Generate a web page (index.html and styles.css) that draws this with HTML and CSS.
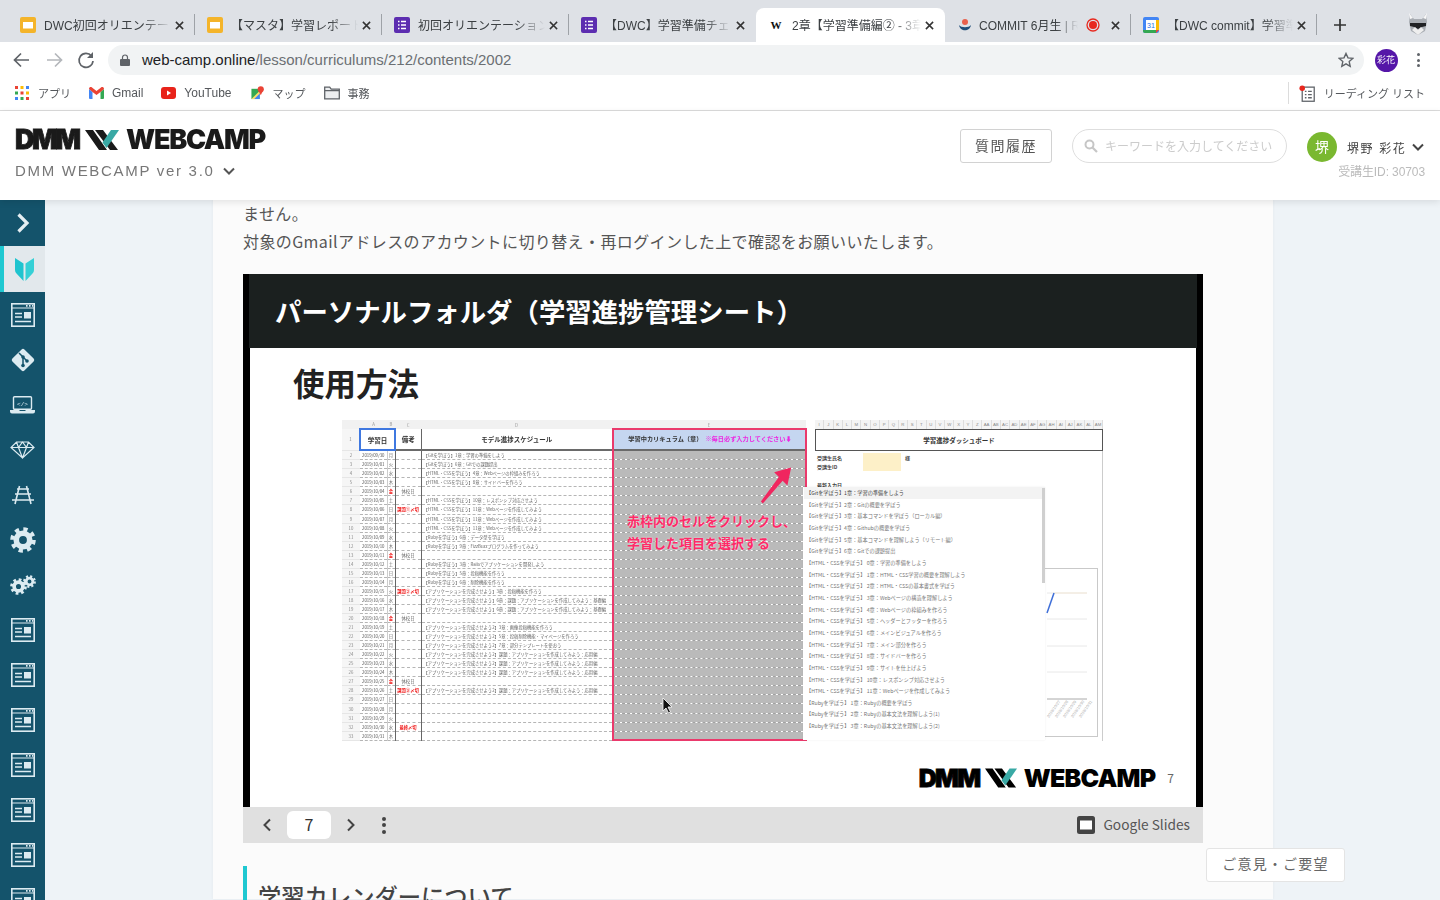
FILE: index.html
```html
<!DOCTYPE html>
<html lang="ja">
<head>
    <meta charset="UTF-8">
    <title>2章【学習準備編② - 3章</title>
    <link rel="stylesheet" href="styles.css">
</head>
<body>
    <svg class="defs" width="0" height="0">
        <symbol id="x" viewBox="0 0 10 10"><path d="M1 1l8 8M9 1l-8 8" stroke="#333" stroke-width="1.7" fill="none"/></symbol>
        <symbol id="fav-slides" viewBox="0 0 16 16"><rect width="16" height="16" rx="2" fill="#f4b42a"/><rect x="3" y="5" width="10" height="6.5" fill="#fff"/></symbol>
        <symbol id="fav-forms" viewBox="0 0 16 16"><rect width="16" height="16" rx="2" fill="#5c2db0"/><path d="M4 4.5h1.5M7 4.5h5M4 8h1.5M7 8h5M4 11.500h1.500M7 11.500h5" stroke="#fff" stroke-width="1.500"/></symbol>
        <symbol id="news" viewBox="0 0 24 24"><g fill="none" stroke="#dcebf1"><rect x=".8" y=".8" width="22.400" height="22.400" stroke-width="1.600"/><path d="M1 5h22" stroke-width="1"/><path d="M4 10.500h7M4 14h7M4 18.500h16" stroke-width="1.500"/></g><path d="M13 9h7v6.500h-7z" fill="#dcebf1"/><path d="M15 2.900h1.600M18 2.900h1.600M21 2.900h1" stroke="#dcebf1" stroke-width="1.600"/></symbol>
        <symbol id="gear" viewBox="0 0 24 24"><circle cx="12" cy="12" r="9.700" fill="none" stroke="#dcebf1" stroke-width="4.200" stroke-dasharray="3.800 3.820"/><circle cx="12" cy="12" r="6.200" fill="none" stroke="#dcebf1" stroke-width="5.200"/></symbol>
    </svg>

    <div class="tabstrip">
        <div class="tab sep"><svg class="fav"><use href="#fav-slides"/></svg><span class="tab-title">DWC初回オリエンテー</span><svg class="tab-x"><use href="#x"/></svg></div>
        <div class="tab sep"><svg class="fav"><use href="#fav-slides"/></svg><span class="tab-title">【マスタ】学習レポート</span><svg class="tab-x"><use href="#x"/></svg></div>
        <div class="tab sep"><svg class="fav"><use href="#fav-forms"/></svg><span class="tab-title">初回オリエンテーション</span><svg class="tab-x"><use href="#x"/></svg></div>
        <div class="tab"><svg class="fav"><use href="#fav-forms"/></svg><span class="tab-title">【DWC】学習準備チェ</span><svg class="tab-x"><use href="#x"/></svg></div>
        <div class="tab tab-active"><span class="fav fav-w">W</span><span class="tab-title">2章【学習準備編② - 3章</span><svg class="tab-x"><use href="#x"/></svg></div>
        <div class="tab tab-narrow sep">
            <svg class="fav" viewBox="0 0 16 16"><circle cx="8" cy="5" r="3" fill="#e8604c"/><path d="M2 8c1 7 11 7 12 0-2 3-10 3-12 0z" fill="#1f4e79"/></svg>
            <span class="tab-title tab-title-short">COMMIT 6月生 | R</span>
            <svg class="rec" viewBox="0 0 14 14"><circle cx="7" cy="7" r="6" fill="none" stroke="#e8281e" stroke-width="1.300"/><circle cx="7" cy="7" r="4" fill="#e8281e"/></svg>
            <svg class="tab-x"><use href="#x"/></svg>
        </div>
        <div class="tab tab-narrow sep">
            <svg class="fav" viewBox="0 0 16 16"><rect width="16" height="16" rx="2" fill="#4285f4"/><rect x="3" y="3" width="10" height="10" fill="#fff"/><path d="M13 3h3v10h-3z" fill="#fbbc04"/><path d="M0 13h13v3H2a2 2 0 0 1-2-2z" fill="#34a853"/><path d="M13 13h3l-3 3z" fill="#ea4335"/><text x="8" y="11" font-size="7" text-anchor="middle" fill="#1a73e8">31</text></svg>
            <span class="tab-title">【DWC commit】学習準</span><svg class="tab-x"><use href="#x"/></svg>
        </div>
        <svg class="newtab" viewBox="0 0 14 14"><path d="M7 1v12M1 7h12" stroke="#333" stroke-width="1.700"/></svg>
        <svg class="raccoon" viewBox="0 0 22 24"><path d="M3 2l4 5h8l4-5 1 8-2 9-7 4-7-4-2-9z" fill="#a9adb3"/><path d="M3 11h16v3l-4 1-4 2-4-2-4-1z" fill="#202124"/><path d="M5 18l3-3 3 3 3-3 3 3-6 5z" fill="#eee"/><path d="M2 1l4 5-3 1zM20 1l-4 5 3 1z" fill="#f8f8f8"/></svg>
    </div>

    <div class="toolbar">
        <svg class="nav-btn" viewBox="0 0 32 32"><path d="M23 16H9M15 9.500L8.500 16l6.500 6.500" fill="none" stroke="#5f6368" stroke-width="1.700"/></svg>
        <svg class="nav-btn" viewBox="0 0 32 32"><path d="M9 16h14M17 9.500l6.500 6.500-6.500 6.500" fill="none" stroke="#b4b7bb" stroke-width="1.700"/></svg>
        <svg class="nav-btn" viewBox="0 0 32 32"><path d="M21.500 12A7 7 0 1 0 23 17" fill="none" stroke="#5f6368" stroke-width="1.700"/><path d="M23 8v6h-6z" fill="#5f6368"/></svg>
        <div class="omnibox">
            <svg class="lock" viewBox="0 0 10 12"><path d="M2.500 5V3.500a2.500 2.500 0 0 1 5 0V5" fill="none" stroke="#5f6368" stroke-width="1.200"/><rect y="5" width="10" height="7" rx="1" fill="#5f6368"/></svg>
            <span class="url"><b>web-camp.online</b>/lesson/curriculums/212/contents/2002</span>
            <svg class="star" viewBox="0 0 16 16"><path d="M8 1.500l2 4.400 4.800.500-3.600 3.200 1 4.700L8 11.900l-4.200 2.400 1-4.700L1.200 6.400 6 5.900z" fill="none" stroke="#5f6368" stroke-width="1.400"/></svg>
        </div>
        <div class="tool-slot"><span class="profile">彩花</span></div>
        <div class="tool-slot"><span class="kebab"><i></i><i></i><i></i></span></div>
    </div>

    <div class="bookmarks">
        <div class="bm">
            <svg class="bm-icon" viewBox="0 0 14 14"><g fill="#ea4335"><rect width="3" height="3"/><rect x="5.500" width="3" height="3" fill="#fbbc04"/><rect x="11" width="3" height="3" fill="#4285f4"/></g><g><rect y="5.500" width="3" height="3" fill="#34a853"/><rect x="5.500" y="5.500" width="3" height="3" fill="#ea4335"/><rect x="11" y="5.500" width="3" height="3" fill="#fbbc04"/><rect y="11" width="3" height="3" fill="#4285f4"/><rect x="5.500" y="11" width="3" height="3" fill="#34a853"/><rect x="11" y="11" width="3" height="3" fill="#ea4335"/></g></svg>
            <span class="bm-ja">アプリ</span>
        </div>
        <div class="bm">
            <svg class="bm-icon" viewBox="0 0 15 12"><path d="M0 2v9a1 1 0 0 0 1 1h2.500V5z" fill="#4285f4"/><path d="M15 2v9a1 1 0 0 1-1 1h-2.500V5z" fill="#34a853"/><path d="M0 2c0-2 2-2.500 3-1.500L7.500 4 12 .5c1-1 3-.5 3 1.500l-3.500 3-4 3-4-3z" fill="#ea4335"/></svg>
            <span>Gmail</span>
        </div>
        <div class="bm">
            <svg class="bm-icon" viewBox="0 0 15 12"><rect width="15" height="12" rx="3" fill="#e8231a"/><path d="M6 3.500v5l4-2.500z" fill="#fff"/></svg>
            <span>YouTube</span>
        </div>
        <div class="bm">
            <svg class="bm-icon bm-maps" viewBox="0 0 15 15"><path d="M1 3h9v11H1z" fill="#34a853"/><path d="M1 14l9-9v9z" fill="#fbdd6c"/><path d="M4 14l6-6v6z" fill="#4285f4"/><circle cx="11" cy="3.500" r="3.300" fill="#ea4335"/><path d="M9 5.500l2 4.500 2-4.500z" fill="#ea4335"/></svg>
            <span class="bm-ja">マップ</span>
        </div>
        <div class="bm">
            <svg class="bm-icon bm-folder" viewBox="0 0 16 13"><path d="M.7 12.300V.7h5l1.500 2h8.100v9.600zM.7 4.200h14.600" fill="#eceef0" stroke="#5f6368" stroke-width="1.300"/></svg>
            <span class="bm-ja">事務</span>
        </div>
        <div class="reading">
            <svg class="bm-read" viewBox="0 0 15 16"><rect x="3" y="2" width="11.300" height="13.300" fill="#fff" stroke="#5f6368" stroke-width="1.200"/><path d="M5.500 6h1.500M8.500 6h3.500M5.500 9h1.500M8.500 9h3.500M5.500 12h1.500M8.500 12h3.500" stroke="#5f6368" stroke-width="1.200"/><circle cx="3" cy="3" r="2.600" fill="#e8281e"/></svg>
            <span class="bm-ja">リーディング リスト</span>
        </div>
    </div>

    <header class="app-header">
        <div>
            <div class="logo">
                <span class="logo-dmm">DMM</span>
                <svg class="logo-mark" viewBox="0 0 35 20"><path d="M0 0h8l14 20h-8zM10 0h8l15 20h-8z" fill="#1a1a1a"/><path d="M26 0h8L21.500 18l-4-5.500z" fill="#39a9a5"/></svg>
                <span class="logo-word">WEBCAMP</span>
            </div>
            <div class="course">
                <span>DMM WEBCAMP ver 3.0</span>
                <svg class="chev" viewBox="0 0 12 8"><path d="M1 1.500l5 5 5-5" fill="none" stroke="#555" stroke-width="2"/></svg>
            </div>
        </div>
        <div class="head-right">
            <a class="history-btn">質問履歴</a>
            <div class="search">
                <svg class="search-icon" viewBox="0 0 14 14"><circle cx="5.500" cy="5.500" r="4" fill="none" stroke="#c6c6c6" stroke-width="2"/><path d="M8.500 8.500l4.500 4.500" stroke="#c6c6c6" stroke-width="2.200"/></svg>
                <span>キーワードを入力してください</span>
            </div>
            <div class="user">
                <div class="user-row">
                    <span class="user-avatar">堺</span>
                    <span class="user-name">堺野 彩花</span>
                    <svg class="chev" viewBox="0 0 12 8"><path d="M1 1.500l5 5 5-5" fill="none" stroke="#444" stroke-width="2"/></svg>
                </div>
                <div class="user-id">受講生ID: 30703</div>
            </div>
        </div>
    </header>

    <div class="app-body">
        <nav class="sidebar">
            <div class="side-item side-top"><svg width="14" height="22" viewBox="0 0 14 22"><path d="M2.500 2.500L11 11l-8.500 8.500" fill="none" stroke="#e4eef2" stroke-width="3.200"/></svg></div>
            <div class="side-item side-active"><svg width="19" height="24" viewBox="0 0 19 24"><path d="M0 1l8.500 5.500V24L1.500 16.500Q0 15 0 13z" fill="#1fc4cf"/><path d="M19 1l-8.500 5.500V24l7-7.500Q19 15 19 13z" fill="#35d0d6"/></svg></div>
            <div class="side-item"><svg class="side-icon"><use href="#news"/></svg></div>
            <div class="side-item"><svg width="26" height="26" viewBox="0 0 26 26"><rect x="4.500" y="4.500" width="17" height="17" rx="2" transform="rotate(45 13 13)" fill="#dcebf1"/><path d="M9 6l8 8M13 10v8" stroke="#14536b" stroke-width="1.500"/><circle cx="13" cy="10" r="1.800" fill="#14536b"/><circle cx="17" cy="14" r="1.800" fill="#14536b"/><circle cx="13" cy="18.500" r="1.800" fill="#14536b"/></svg></div>
            <div class="side-item"><svg width="25" height="18" viewBox="0 0 25 18"><rect x="3.500" y=".7" width="18" height="12.600" rx="1" fill="none" stroke="#dcebf1" stroke-width="1.400"/><path d="M0 14h9l1 1h5l1-1h9v1.500a2 2 0 0 1-2 2H2a2 2 0 0 1-2-2z" fill="#dcebf1"/><text x="12.500" y="9.500" font-size="6" text-anchor="middle" fill="#dcebf1" font-family="Liberation Mono">&lt;/&gt;</text></svg></div>
            <div class="side-item"><svg width="25" height="18" viewBox="0 0 25 18"><path d="M6.500 1h12l5.500 5.500L12.500 17 1 6.500zM1 6.500h23M6.500 1l2 5.500 4 10.500 4-10.500 2-5.500M8.500 6.500L12.500 1l4 5.500" fill="none" stroke="#dcebf1" stroke-width="1.200"/></svg></div>
            <div class="side-item"><svg width="24" height="20" viewBox="0 0 24 20"><path d="M8.500 1L4 19M15.500 1L20 19M1 15h22M4 9h16M6 4h12" fill="none" stroke="#dcebf1" stroke-width="1.600"/></svg></div>
            <div class="side-item"><svg class="side-icon side-gear"><use href="#gear"/></svg></div>
            <div class="side-item"><div class="gears"><svg class="gear-big"><use href="#gear"/></svg><svg class="gear-small"><use href="#gear"/></svg></div></div>
            <div class="side-item"><svg class="side-icon"><use href="#news"/></svg></div>
            <div class="side-item"><svg class="side-icon"><use href="#news"/></svg></div>
            <div class="side-item"><svg class="side-icon"><use href="#news"/></svg></div>
            <div class="side-item"><svg class="side-icon"><use href="#news"/></svg></div>
            <div class="side-item"><svg class="side-icon"><use href="#news"/></svg></div>
            <div class="side-item"><svg class="side-icon"><use href="#news"/></svg></div>
            <div class="side-item"><svg class="side-icon"><use href="#news"/></svg></div>
        </nav>

        <main class="main">
            <article class="card">
                <p class="lead">ません。<br>対象のGmailアドレスのアカウントに切り替え・再ログインした上で確認をお願いいたします。</p>

                <div class="slide">
                    <div class="slide-title">パーソナルフォルダ（学習進捗管理シート）</div>
                    <div class="slide-heading">使用方法</div>

                    <div class="sheet">
                        <table class="grid">
                            <colgroup><col class="c-n"><col class="c-a"><col class="c-b"><col class="c-c"><col class="c-d"><col class="c-e"></colgroup>
                            <tr class="letters"><th></th><th>A</th><th>B</th><th>C</th><th>D</th><th>E</th></tr>
                            <tr class="heads"><th>1</th><td colspan="2" class="h-sel">学習日</td><td class="h-c">備考</td><td class="h-d">モデル進捗スケジュール</td><td class="h-e">学習中カリキュラム（章）<em>※毎日必ず入力してください⬇</em></td></tr>
                            <tr><th>2</th><td>2019/09/30</td><td>月</td><td></td><td>【Gitを学ぼう】1章：学習の準備をしよう</td><td></td></tr>
                            <tr><th>3</th><td>2019/10/01</td><td>火</td><td></td><td>【Gitを学ぼう】6章：Gitでの課題提出</td><td></td></tr>
                            <tr><th>4</th><td>2019/10/02</td><td>水</td><td></td><td>【HTML・CSSを学ぼう】4章：Webページの枠組みを作ろう</td><td></td></tr>
                            <tr><th>5</th><td>2019/10/03</td><td>木</td><td></td><td>【HTML・CSSを学ぼう】8章：サイドバーを作ろう</td><td></td></tr>
                            <tr><th>6</th><td>2019/10/04</td><td class="red">金</td><td>休校日</td><td></td><td></td></tr>
                            <tr><th>7</th><td>2019/10/05</td><td>土</td><td></td><td>【HTML・CSSを学ぼう】10章：レスポンシブ対応させよう</td><td></td></tr>
                            <tr><th>8</th><td>2019/10/06</td><td>日</td><td class="red">課題①〆切</td><td>【HTML・CSSを学ぼう】11章：Webページを作成してみよう</td><td></td></tr>
                            <tr><th>9</th><td>2019/10/07</td><td>月</td><td></td><td>【HTML・CSSを学ぼう】11章：Webページを作成してみよう</td><td></td></tr>
                            <tr><th>10</th><td>2019/10/08</td><td>火</td><td></td><td>【HTML・CSSを学ぼう】11章：Webページを作成してみよう</td><td></td></tr>
                            <tr><th>11</th><td>2019/10/09</td><td>水</td><td></td><td>【Rubyを学ぼう】6章：データ型を学ぼう</td><td></td></tr>
                            <tr><th>12</th><td>2019/10/10</td><td>木</td><td></td><td>【Rubyを学ぼう】9章：FizzBuzzプログラムを作ってみよう</td><td></td></tr>
                            <tr><th>13</th><td>2019/10/11</td><td class="red">金</td><td>休校日</td><td></td><td></td></tr>
                            <tr><th>14</th><td>2019/10/12</td><td>土</td><td></td><td>【Rubyを学ぼう】3章：Railsでアプリケーションを開発しよう</td><td></td></tr>
                            <tr><th>15</th><td>2019/10/13</td><td>日</td><td></td><td>【Rubyを学ぼう】5章：投稿機能を作ろう</td><td></td></tr>
                            <tr><th>16</th><td>2019/10/14</td><td>月</td><td></td><td>【Rubyを学ぼう】6章：削除機能を作ろう</td><td></td></tr>
                            <tr><th>17</th><td>2019/10/15</td><td>火</td><td class="red">課題②〆切</td><td>【アプリケーションを完成させよう】3章：投稿機能を作ろう</td><td></td></tr>
                            <tr><th>18</th><td>2019/10/16</td><td>水</td><td></td><td>【アプリケーションを完成させよう】6章：課題：アプリケーションを作成してみよう：基礎編</td><td></td></tr>
                            <tr><th>19</th><td>2019/10/17</td><td>木</td><td></td><td>【アプリケーションを完成させよう】6章：課題：アプリケーションを作成してみよう：基礎編</td><td></td></tr>
                            <tr><th>20</th><td>2019/10/18</td><td class="red">金</td><td>休校日</td><td></td><td></td></tr>
                            <tr><th>21</th><td>2019/10/19</td><td>土</td><td></td><td>【アプリケーションを完成させよう2】3章：画像投稿機能を作ろう</td><td></td></tr>
                            <tr><th>22</th><td>2019/10/20</td><td>日</td><td></td><td>【アプリケーションを完成させよう2】5章：投稿削除機能・マイページを作ろう</td><td></td></tr>
                            <tr><th>23</th><td>2019/10/21</td><td>月</td><td></td><td>【アプリケーションを完成させよう2】7章：部分テンプレートを使おう</td><td></td></tr>
                            <tr><th>24</th><td>2019/10/22</td><td>火</td><td></td><td>【アプリケーションを完成させよう2】課題：アプリケーションを作成してみよう：応用編</td><td></td></tr>
                            <tr><th>25</th><td>2019/10/23</td><td>水</td><td></td><td>【アプリケーションを完成させよう2】課題：アプリケーションを作成してみよう：応用編</td><td></td></tr>
                            <tr><th>26</th><td>2019/10/24</td><td>木</td><td></td><td>【アプリケーションを完成させよう2】課題：アプリケーションを作成してみよう：応用編</td><td></td></tr>
                            <tr><th>27</th><td>2019/10/25</td><td class="red">金</td><td>休校日</td><td></td><td></td></tr>
                            <tr><th>28</th><td>2019/10/26</td><td>土</td><td class="red">課題③〆切</td><td>【アプリケーションを完成させよう2】課題：アプリケーションを作成してみよう：応用編</td><td></td></tr>
                            <tr><th>29</th><td>2019/10/27</td><td>日</td><td></td><td></td><td></td></tr>
                            <tr><th>30</th><td>2019/10/28</td><td>月</td><td></td><td></td><td></td></tr>
                            <tr><th>31</th><td>2019/10/29</td><td>火</td><td></td><td></td><td></td></tr>
                            <tr><th>32</th><td>2019/10/30</td><td>水</td><td class="red">最終〆切</td><td></td><td></td></tr>
                            <tr><th>33</th><td>2019/10/31</td><td>木</td><td></td><td></td><td></td></tr>
                        </table>

                        <div class="board">
                            <div class="board-letters"><span>I</span><span>J</span><span>K</span><span>L</span><span>M</span><span>N</span><span>O</span><span>P</span><span>Q</span><span>R</span><span>S</span><span>T</span><span>U</span><span>V</span><span>W</span><span>X</span><span>Y</span><span>Z</span><span>AA</span><span>AB</span><span>AC</span><span>AD</span><span>AE</span><span>AF</span><span>AG</span><span>AH</span><span>AI</span><span>AJ</span><span>AK</span><span>AL</span><span>AM</span></div>
                            <div class="board-head">学習進捗ダッシュボード</div>
                            <div class="board-info">
                                <span>受講生氏名</span><i class="board-yellow"></i><span>様</span>
                                <span>受講生ID</span><span></span>
                                <span class="board-gap"></span>
                                <span>最新入力日</span>
                            </div>
                        </div>

                        <svg class="chart" viewBox="0 0 283 169">
                            <rect x=".5" y=".5" width="282" height="168" fill="#fff" stroke="#c9c9c9"/>
                            <path d="M232 25h40M232 51h40M232 78h40M232 104h40" stroke="#e8e8e8"/>
                            <path d="M232 131h40" stroke="#aaa"/>
                            <path d="M239 25h33" stroke="#f5ead9"/>
                            <path d="M232 45l7-20" stroke="#3f6fd8" stroke-width="1.500" fill="none"/>
                            <g font-size="4" fill="#aaa" font-family="Liberation Sans">
                                <text transform="translate(234 150) rotate(-55)">2019/10/27</text>
                                <text transform="translate(242 150) rotate(-55)">2019/10/28</text>
                                <text transform="translate(250 150) rotate(-55)">2019/10/29</text>
                                <text transform="translate(258 150) rotate(-55)">2019/10/30</text>
                                <text transform="translate(266 150) rotate(-55)">2019/10/31</text>
                            </g>
                        </svg>

                        <div class="e-frame"></div>
                        <ul class="dropdown">
                            <li class="on">【Gitを学ぼう】1章：学習の準備をしよう</li>
                            <li>【Gitを学ぼう】2章：Gitの概要を学ぼう</li>
                            <li>【Gitを学ぼう】3章：基本コマンドを学ぼう（ローカル編）</li>
                            <li>【Gitを学ぼう】4章：Githubの概要を学ぼう</li>
                            <li>【Gitを学ぼう】5章：基本コマンドを理解しよう（リモート編）</li>
                            <li>【Gitを学ぼう】6章：Gitでの課題提出</li>
                            <li>【HTML・CSSを学ぼう】 0章：学習の準備をしよう</li>
                            <li>【HTML・CSSを学ぼう】 1章：HTML・CSS学習の概要を理解しよう</li>
                            <li>【HTML・CSSを学ぼう】 2章：HTML・CSSの基本書式を学ぼう</li>
                            <li>【HTML・CSSを学ぼう】 3章：Webページの構造を理解しよう</li>
                            <li>【HTML・CSSを学ぼう】 4章：Webページの枠組みを作ろう</li>
                            <li>【HTML・CSSを学ぼう】 5章：ヘッダーとフッターを作ろう</li>
                            <li>【HTML・CSSを学ぼう】 6章：メインビジュアルを作ろう</li>
                            <li>【HTML・CSSを学ぼう】 7章：メイン部分を作ろう</li>
                            <li>【HTML・CSSを学ぼう】 8章：サイドバーを作ろう</li>
                            <li>【HTML・CSSを学ぼう】 9章：サイトを仕上げよう</li>
                            <li>【HTML・CSSを学ぼう】 10章：レスポンシブ対応させよう</li>
                            <li>【HTML・CSSを学ぼう】 11章：Webページを作成してみよう</li>
                            <li>【Rubyを学ぼう】 1章：Rubyの概要を学ぼう</li>
                            <li>【Rubyを学ぼう】 2章：Rubyの基本文法を理解しよう(1)</li>
                            <li>【Rubyを学ぼう】 3章：Rubyの基本文法を理解しよう(2)</li>
                        </ul>
                        <svg class="callout-arrow" viewBox="0 0 36 40"><path d="M33 1L15 6l5 5L1 37l2 2 21-24 5 5z" fill="#f0265f"/></svg>
                        <div class="callout">赤枠内のセルをクリックし、<br>学習した項目を選択する</div>
                        <svg class="cursor" viewBox="0 0 12 17"><path d="M1 1v13l3-3 2.500 5 2-1-2.500-5h4z" fill="#111" stroke="#fff" stroke-width=".8"/></svg>
                    </div>

                    <div class="slide-foot">
                        <div class="logo logo-small">
                            <span class="logo-dmm">DMM</span>
                            <svg class="logo-mark" viewBox="0 0 35 20"><path d="M0 0h8l14 20h-8zM10 0h8l15 20h-8z" fill="#000"/><path d="M26 0h8L21.500 18l-4-5.500z" fill="#39a9a5"/></svg>
                            <span class="logo-word">WEBCAMP</span>
                        </div>
                        <span class="page-no">7</span>
                    </div>
                </div>

                <div class="slide-bar">
                    <svg class="bar-chev" viewBox="0 0 10 14"><path d="M8 1.500L2.500 7 8 12.500" fill="none" stroke="#444" stroke-width="2"/></svg>
                    <span class="bar-page">7</span>
                    <svg class="bar-chev" viewBox="0 0 10 14"><path d="M2 1.500L7.500 7 2 12.500" fill="none" stroke="#444" stroke-width="2"/></svg>
                    <span class="kebab bar-kebab"><i></i><i></i><i></i></span>
                    <svg class="bar-slides" viewBox="0 0 18 18"><rect width="18" height="18" rx="2.500" fill="#444"/><rect x="3" y="4.500" width="12" height="9" fill="#fff"/></svg>
                    <span class="bar-name">Google Slides</span>
                </div>

                <h2 class="section-title">学習カレンダーについて</h2>
            </article>
        </main>
    </div>

    <a class="feedback">ご意見・ご要望</a>
</body>
</html>
```

FILE: styles.css
```css
* {
    box-sizing: border-box;
}
html, body {
    margin: 0;
    height: 900px;
    overflow: hidden;
}
body {
    position: relative;
    background: #fff;
    font-family: "Liberation Sans", "Noto Sans CJK JP", sans-serif;
    color: #3c4043;
    filter: blur(.3px);
}
.defs {
    position: absolute;
}

/* browser chrome */
.tabstrip {
    display: flex;
    align-items: flex-end;
    height: 42px;
    padding-left: 8px;
    background: #dee1e6;
}
.tab {
    position: relative;
    display: flex;
    align-items: center;
    width: 187px;
    height: 34px;
    padding: 0 11px 0 12px;
    font-size: 12px;
}
.tab.sep::after {
    content: "";
    position: absolute;
    right: 0;
    top: 6px;
    width: 1px;
    height: 21px;
    background: #9ea2a7;
}
.tab-active {
    width: 189px;
    background: #fff;
    border-radius: 8px 8px 0 0;
}
.tab-narrow {
    width: 186px;
}
.fav {
    flex: none;
    width: 16px;
    height: 16px;
}
.fav-w {
    font-family: "Liberation Serif", serif;
    font-weight: 700;
    font-size: 11px;
    line-height: 16px;
    text-align: center;
    color: #111;
}
.tab-title {
    flex: 1;
    min-width: 0;
    margin: 0 4px 2px 8px;
    white-space: nowrap;
    overflow: hidden;
    -webkit-mask-image: linear-gradient(to right, #000 78%, transparent);
}
.tab-title-short {
    flex: 0 0 99px;
    margin: 0 0 2px 6px;
}
.rec {
    flex: none;
    width: 14px;
    height: 14px;
    margin: 0 11px 0 8px;
}
.tab-x {
    flex: none;
    width: 9px;
    height: 9px;
}
.newtab {
    width: 14px;
    height: 14px;
    margin: 0 0 10px 16px;
}
.raccoon {
    width: 22px;
    height: 24px;
    margin: 0 11px 6px auto;
}
.toolbar {
    display: flex;
    align-items: center;
    height: 36px;
    padding: 0 6px;
    background: #fff;
}
.nav-btn {
    flex: none;
    width: 32px;
    height: 32px;
}
.omnibox {
    flex: 1;
    display: flex;
    align-items: center;
    height: 30px;
    margin: 0 6px;
    padding: 0 10px 0 12px;
    background: #f1f3f4;
    border-radius: 15px;
    font-size: 15px;
}
.lock {
    width: 10px;
    height: 12px;
    margin-right: 12px;
}
.url {
    margin-bottom: 1px;
    color: #6b6f73;
}
.url b {
    font-weight: 400;
    color: #202124;
}
.star {
    width: 16px;
    height: 16px;
    margin-left: auto;
}
.tool-slot {
    display: flex;
    justify-content: center;
    width: 32px;
}
.profile {
    width: 23px;
    height: 23px;
    border-radius: 50%;
    background: #5516a8;
    color: #fff;
    font-size: 9px;
    line-height: 23px;
    text-align: center;
}
.kebab {
    display: flex;
    flex-direction: column;
    gap: 2.500px;
}
.kebab i {
    width: 3px;
    height: 3px;
    border-radius: 50%;
    background: #5f6368;
}
.bookmarks {
    display: flex;
    align-items: center;
    height: 33px;
    padding: 0 15px 2px;
    border-bottom: 1px solid #dcdcdc;
    font-size: 12px;
    color: #55585c;
}
.bm {
    display: flex;
    align-items: center;
    gap: 8px;
    margin-right: 18px;
}
.bm:first-child {
    gap: 9px;
}
.bm-ja {
    font-size: 11px;
}
.bm-icon {
    flex: none;
    width: 14px;
    height: 14px;
}
.bm:nth-child(2) .bm-icon,
.bm:nth-child(3) .bm-icon,
.bm-maps {
    width: 15px;
}
.bm-folder {
    width: 16px;
}
.reading {
    display: flex;
    align-items: center;
    gap: 9px;
    height: 22px;
    margin-left: auto;
    padding-left: 10px;
    border-left: 1px solid #dcdcdc;
}
.bm-read {
    width: 16px;
    height: 17px;
}

/* site header */
.app-header {
    position: relative;
    z-index: 2;
    display: flex;
    justify-content: space-between;
    height: 89px;
    padding: 18px 15px 0;
    background: #fff;
    box-shadow: 0 2px 7px rgba(0, 0, 0, .1);
}
.logo {
    display: flex;
    align-items: center;
    height: 22px;
    font-family: Inter, "Liberation Sans", sans-serif;
    font-size: 27px;
    font-weight: 900;
    line-height: 22px;
    color: #1a1a1a;
}
.logo-dmm {
    width: 67px;
    letter-spacing: -2.500px;
    -webkit-text-stroke: .8px currentColor;
}
.logo-mark {
    width: 35px;
    height: 20px;
    margin: 0 6px 0 3px;
}
.logo-word {
    letter-spacing: -1.300px;
}
.logo-small {
    font-size: 25px;
    color: #000;
}
.logo-small .logo-dmm {
    width: 63px;
    letter-spacing: -1.800px;
}
.logo-small .logo-mark {
    width: 33px;
    margin: 0 6px 0 3px;
}
.logo-small .logo-word {
    letter-spacing: -.8px;
}
.course {
    display: flex;
    align-items: center;
    gap: 8px;
    margin-top: 11px;
    font-size: 15px;
    letter-spacing: 1.700px;
    color: #777;
}
.chev {
    width: 12px;
    height: 8px;
}
.head-right {
    display: flex;
    align-items: flex-start;
    gap: 20px;
}
.history-btn {
    width: 92px;
    height: 34px;
    border: 1px solid #d2d2d2;
    border-radius: 3px;
    font-size: 14px;
    letter-spacing: 1.500px;
    line-height: 32px;
    text-align: center;
    color: #555;
}
.search {
    display: flex;
    align-items: center;
    gap: 7px;
    width: 215px;
    height: 34px;
    padding: 0 0 1px 11px;
    border: 1px solid #dedede;
    border-radius: 17px;
    font-size: 12px;
    color: #ccc;
}
.search-icon {
    width: 14px;
    height: 14px;
}
.user {
    width: 118px;
    padding-top: 3px;
}
.user-row {
    display: flex;
    align-items: center;
}
.user-avatar {
    width: 30px;
    height: 30px;
    border-radius: 50%;
    background: #7ab830;
    color: #fff;
    font-size: 14px;
    line-height: 30px;
    text-align: center;
}
.user-name {
    margin: 0 6px 0 10px;
    font-size: 12px;
    letter-spacing: 1.600px;
    color: #444;
    white-space: nowrap;
}
.user-id {
    font-size: 12px;
    letter-spacing: -.1px;
    text-align: right;
    color: #bbb;
    white-space: nowrap;
}

/* sidebar + page */
.app-body {
    display: flex;
    height: 700px;
    overflow: hidden;
    font-family: "Noto Sans CJK JP", sans-serif;
}
.sidebar {
    flex: none;
    width: 45px;
    background: #14536b;
}
.side-item {
    display: flex;
    align-items: center;
    justify-content: center;
    height: 45px;
}
.side-top {
    height: 46px;
}
.side-active {
    height: 46px;
    background: #e2e8ec;
    border-left: 4px solid #1fc8d1;
}
.side-icon {
    width: 24px;
    height: 24px;
}
.side-gear {
    width: 26px;
    height: 26px;
}
.gears {
    position: relative;
    width: 26px;
    height: 20px;
}
.gear-big {
    position: absolute;
    left: 0;
    bottom: 0;
    width: 17px;
    height: 17px;
}
.gear-small {
    position: absolute;
    right: 0;
    top: 0;
    width: 13px;
    height: 13px;
}
.main {
    flex: 1;
    padding-left: 168px;
    background: #eef3f7;
}
.card {
    width: 1060px;
    height: 100%;
    padding: 0 30px;
    background: #fbfbfb;
    box-shadow: 0 0 3px rgba(0, 0, 0, .05);
}
.lead {
    margin: -1px 0 19px;
    font-size: 16px;
    line-height: 28px;
    letter-spacing: .4px;
    color: #555;
    white-space: nowrap;
}

/* embedded slide */
.slide {
    width: 960px;
    height: 533px;
    border: solid #000;
    border-width: 0 7px;
    background: #fff;
}
.slide-title {
    height: 74px;
    margin: 0 -1px;
    padding-left: 26px;
    background: #1b201f;
    font-size: 26.400px;
    font-weight: 700;
    line-height: 74px;
    color: #fff;
    white-space: nowrap;
}
.slide-heading {
    height: 72px;
    padding: 12px 0 0 43px;
    font-size: 31.500px;
    font-weight: 700;
    line-height: 44px;
    color: #222;
}
.sheet {
    position: relative;
    display: flex;
    gap: 9px;
    width: 761px;
    height: 321px;
    margin-left: 92px;
    font-size: 4.300px;
    color: #666;
}
.grid {
    flex: none;
    width: 464px;
    height: 321px;
    table-layout: fixed;
    border-collapse: collapse;
    filter: blur(.2px);
}
.c-n { width: 18px; }
.c-a { width: 27px; }
.c-b { width: 8px; }
.c-c { width: 26px; }
.c-d { width: 191px; }
.c-e { width: 194px; }
.grid tr {
    height: 9px;
}
.grid th,
.grid td {
    height: 9px;
    padding: 0;
    overflow: hidden;
    font-weight: 400;
    line-height: 8px;
    white-space: nowrap;
}
.grid th {
    background: #f6f6f6;
    color: #888;
    text-align: center;
    border-bottom: 1px solid #e6e6e6;
}
.grid td {
    border-bottom: 1px dashed #b5b5b5;
    text-align: center;
}
.grid td:nth-child(2) {
    color: #555;
}
.grid td:nth-child(3) {
    border-left: 1px solid #ccc;
}
.grid td:nth-child(4) {
    border-left: 1.500px solid #666;
}
.grid td:nth-child(5) {
    border-left: 1.500px solid #666;
    padding-left: 2px;
    text-align: left;
}
.grid td:nth-child(6) {
    background: #bababa;
    border-bottom-color: #a2a2a2;
}
.grid .red {
    color: #f01818;
    font-weight: 700;
}
.letters th {
    background: #f1f1f1;
    color: #999;
    border-bottom: 0;
}
.grid .heads,
.grid .heads th,
.grid .heads td {
    height: 21px;
}
.grid .heads td {
    border-bottom: 2px solid #6a6a6a;
    font-size: 6.500px;
    font-weight: 700;
    color: #333;
}
.grid .heads .h-sel {
    border: 2px solid #3f78e0;
}
.grid .heads .h-c {
    border-left: 1.500px solid #666;
}
.grid .heads .h-d {
    border-left: 1.500px solid #666;
    text-align: center;
}
.grid .heads .h-e {
    border-left: 0;
    background: #c5d6f0;
    font-size: 6.200px;
    text-align: center;
}
.h-e em {
    margin-left: 3px;
    font-style: normal;
    color: #ec28e2;
}
.board {
    flex: none;
    width: 288px;
}
.board-letters {
    display: flex;
    height: 9px;
    background: #f4f4f4;
    color: #888;
    font-family: "Liberation Sans", sans-serif;
    line-height: 9px;
}
.board-letters span {
    flex: 1;
    border-right: 1px solid #ddd;
    text-align: center;
}
.board-head {
    height: 22px;
    border: 1px solid #555;
    border-bottom-width: 1.500px;
    font-size: 6.500px;
    font-weight: 700;
    line-height: 20px;
    text-align: center;
    color: #333;
}
.board-info {
    display: grid;
    grid-template-columns: 46px 38px auto;
    grid-auto-rows: 9px;
    height: 290px;
    padding: 2px 2px 0;
    border-right: 1px solid #ccc;
    font-size: 5px;
    font-weight: 700;
    line-height: 9px;
    color: #444;
}
.board-yellow {
    grid-column: 2;
    grid-row: 1 / 3;
    background: #fdf0c8;
}
.board-info span:nth-of-type(2) {
    padding-left: 4px;
}
.board-gap {
    grid-column: 1 / 4;
}
.chart {
    position: absolute;
    left: 473px;
    top: 148px;
    width: 283px;
    height: 169px;
}
.e-frame {
    position: absolute;
    left: 270px;
    top: 8px;
    width: 195px;
    height: 313px;
    border: 2px solid #ea3a6c;
}
.dropdown {
    position: absolute;
    left: 461px;
    top: 67px;
    width: 242px;
    height: 253px;
    margin: 0;
    padding: 0 0 0 1px;
    list-style: none;
    background: #fff;
    box-shadow: 0 0 2px rgba(0, 0, 0, .07);
    font-size: 5.200px;
    color: #777;
    overflow: hidden;
}
.dropdown::after {
    content: "";
    position: absolute;
    right: 0;
    top: 1px;
    width: 3px;
    height: 95px;
    background: #cfcfcf;
}
.dropdown li {
    height: 11.670px;
    padding-left: 2px;
    line-height: 11.670px;
    white-space: nowrap;
}
.dropdown .on {
    background: #f3f3f3;
    color: #444;
}
.callout-arrow {
    position: absolute;
    left: 418px;
    top: 46px;
    width: 34px;
    height: 39px;
}
.callout {
    position: absolute;
    left: 285px;
    top: 90px;
    font-size: 13px;
    font-weight: 700;
    line-height: 22px;
    color: #ff2a68;
    white-space: nowrap;
    text-shadow: 0 0 2px rgba(255, 255, 255, .7);
}
.cursor {
    position: absolute;
    left: 320px;
    top: 277px;
    width: 12px;
    height: 17px;
}
.slide-foot {
    display: flex;
    align-items: center;
    justify-content: flex-end;
    gap: 12px;
    height: 66px;
    padding: 7px 22px 0 0;
}
.page-no {
    font-size: 12px;
    color: #666;
}
.slide-bar {
    display: flex;
    align-items: center;
    width: 960px;
    height: 36px;
    padding: 0 13px 0 19px;
    background: #e0e0e0;
}
.bar-chev {
    width: 10px;
    height: 14px;
}
.bar-page {
    width: 44px;
    height: 28px;
    margin: 0 15px;
    border-radius: 6px;
    background: #fff;
    font-size: 16px;
    line-height: 26px;
    text-align: center;
    color: #333;
}
.bar-kebab {
    margin-left: 26px;
}
.bar-kebab i {
    background: #444;
    width: 4px;
    height: 4px;
}
.bar-slides {
    width: 18px;
    height: 18px;
    margin: 0 8px 0 auto;
}
.bar-name {
    margin-bottom: 2px;
    font-size: 13.700px;
    color: #555;
}
.section-title {
    margin: 23px 0 0;
    padding: 13px 0 0 11px;
    border-left: 4px solid #1fc8d1;
    font-size: 23.300px;
    font-weight: 500;
    line-height: 34px;
    color: #444;
}
.feedback {
    position: absolute;
    right: 95px;
    bottom: 18px;
    width: 139px;
    height: 34px;
    background: #fff;
    border: 1px solid #e4e4e4;
    border-radius: 3px;
    font-family: "Noto Sans CJK JP", sans-serif;
    font-size: 14px;
    letter-spacing: 1.200px;
    line-height: 29px;
    text-align: center;
    color: #666;
}
```
